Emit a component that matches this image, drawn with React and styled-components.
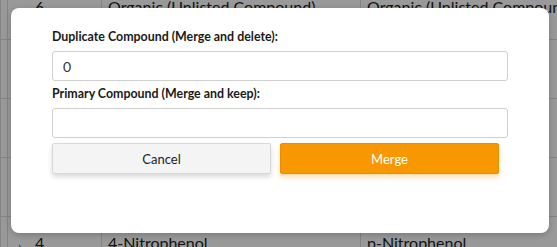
import React from 'react';
import styled, { createGlobalStyle } from 'styled-components';

const GlobalStyle = createGlobalStyle`
  html, body {
    margin: 0;
    padding: 0;
    width: 557px;
    height: 247px;
    overflow: hidden;
    font-family: Lato, "Noto Sans", sans-serif;
  }
`;

const StyledPage = styled.div`
  position: relative;
  width: 557px;
  height: 247px;
  overflow: hidden;
  background: #fff;
`;

const StyledTable = styled.div`
  margin-top: -19px;
  display: flex;
  flex-direction: column;
`;

const StyledRow = styled.div`
  display: grid;
  grid-template-columns: 7px 94px 259px 1fr;
  height: 59px;
  border-bottom: 1px solid #dcdcdc;
  box-sizing: border-box;
`;

const StyledCell = styled.div`
  border-left: 1px solid #dcdcdc;
  padding: 16px 0 0 ${(p) => p.$indent || 6}px;
  font-size: 16px;
  color: #222;
  white-space: nowrap;
  overflow: hidden;
  position: relative;
`;

const StyledChevron = styled.span`
  position: absolute;
  left: 10px;
  top: 20px;
  color: #2f5fa8;
  font-size: 15px;
`;

const StyledOverlay = styled.div`
  position: absolute;
  inset: 0;
  background: rgba(0, 0, 0, 0.4);
  display: flex;
  align-items: flex-start;
  justify-content: flex-start;
  padding: 8px 0 0 11px;
`;

const StyledModal = styled.div`
  width: 538px;
  height: 225px;
  box-sizing: border-box;
  background: #fff;
  border-radius: 8px;
  box-shadow: 0 2px 6px rgba(0, 0, 0, 0.2);
  padding: 21px 41px 0 41px;
  display: flex;
  flex-direction: column;
`;

const StyledLabel = styled.label`
  font-size: 12.4px;
  font-weight: 700;
  color: #1a1a1a;
  line-height: 16px;
  margin-bottom: 6px;
`;

const StyledInput = styled.input`
  height: 30px;
  box-sizing: border-box;
  border: 1px solid #cfcfcf;
  border-radius: 3px;
  padding: 0 10px;
  font-family: Lato, "Noto Sans", sans-serif;
  font-size: 14px;
  color: #333;
  outline: none;
  margin-bottom: ${(p) => p.$gap || 5}px;
`;

const StyledActions = styled.div`
  display: flex;
  gap: 9px;
  width: 447px;
`;

const StyledButton = styled.button`
  flex: 1;
  height: 31px;
  box-sizing: border-box;
  border-radius: 2px;
  font-family: Lato, "Noto Sans", sans-serif;
  font-size: 13px;
  cursor: pointer;
  border: 1px solid ${(p) => (p.$primary ? '#e88f00' : '#d8d8d8')};
  background: ${(p) => (p.$primary ? '#f79800' : '#f4f4f4')};
  color: ${(p) => (p.$primary ? '#fff' : '#222')};
  box-shadow: ${(p) =>
    p.$primary ? '0 3px 5px rgba(247, 152, 0, 0.35)' : '0 3px 5px rgba(0, 0, 0, 0.15)'};
`;

const rows = [
  ['6', 'Organic (Unlisted Compound)', 'Organic (Unlisted Compound)'],
  ['', '', ''],
  ['', '', ''],
  ['', '', ''],
  ['4', '4-Nitrophenol', 'p-Nitrophenol'],
];

const App = () => (
  <StyledPage>
    <GlobalStyle />
    <StyledTable>
      {rows.map((r, i) => (
        <StyledRow key={i}>
          <StyledCell />
          <StyledCell $indent={27}>
            {(i === 0 || i === 4) && <StyledChevron>&#x203A;</StyledChevron>}
            {r[0]}
          </StyledCell>
          <StyledCell>{r[1]}</StyledCell>
          <StyledCell>{r[2]}</StyledCell>
        </StyledRow>
      ))}
    </StyledTable>
    <StyledOverlay>
      <StyledModal>
        <StyledLabel>Duplicate Compound (Merge and delete):</StyledLabel>
        <StyledInput defaultValue="0" $gap={5} />
        <StyledLabel>Primary Compound (Merge and keep):</StyledLabel>
        <StyledInput defaultValue="" $gap={5} />
        <StyledActions>
          <StyledButton>Cancel</StyledButton>
          <StyledButton $primary>Merge</StyledButton>
        </StyledActions>
      </StyledModal>
    </StyledOverlay>
  </StyledPage>
);

export default App;
